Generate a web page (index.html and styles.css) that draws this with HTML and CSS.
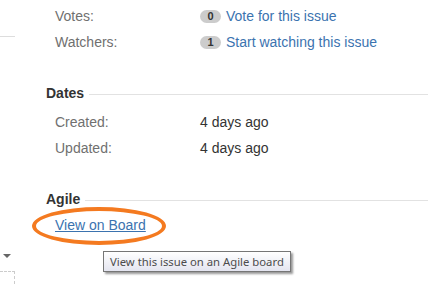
FILE: index.html
```html
<!DOCTYPE html>
<html lang="en">
<head>
    <meta charset="utf-8" />
    <link rel="stylesheet" href="styles.css">
</head>
<body>
    <div id="page">
        <div class="side">
            <div class="side-top"></div>
            <div class="side-arrow"></div>
            <div class="side-box"></div>
        </div>

        <div class="main">
            <ul class="props">
                <li>
                    <span class="label">Votes:</span>
                    <span class="value"><span class="badge">0</span><a href="#">Vote for this issue</a></span>
                </li>
                <li>
                    <span class="label">Watchers:</span>
                    <span class="value"><span class="badge">1</span><a href="#">Start watching this issue</a></span>
                </li>
            </ul>

            <h2 class="mod-head">Dates</h2>
            <ul class="props">
                <li>
                    <span class="label">Created:</span>
                    <span class="value">4 days ago</span>
                </li>
                <li>
                    <span class="label">Updated:</span>
                    <span class="value">4 days ago</span>
                </li>
            </ul>

            <h2 class="mod-head">Agile</h2>
            <div class="agile">
                <a class="board" href="#">View on Board</a>
                <span class="circle"></span>
                <span class="tip">View this issue on an Agile board</span>
            </div>
        </div>
    </div>
</body>
</html>
```

FILE: styles.css
```css
* {
    padding: 0;
    margin: 0;
}

li {
    list-style: none;
}

body {
    background: #fff;
    font-family: Arial, "Liberation Sans", sans-serif;
    font-size: 14px;
    color: #333;
    overflow: hidden;
}

#page {
    display: flex;
    gap: 31px;
    padding-top: 3px;
}

.side {
    width: 15px;
    flex: none;
}

.side-top {
    height: 33px;
    border-bottom: 1px solid #ddd;
}

.side-arrow {
    width: 0;
    height: 0;
    margin: 217px 0 0 3px;
    border-left: 4px solid transparent;
    border-right: 4px solid transparent;
    border-top: 4px solid #666;
}

.side-box {
    width: 14px;
    height: 12px;
    margin-top: 13px;
    border-top: 1px dashed #ccc;
    border-right: 1px dashed #ccc;
}

.main {
    width: 382px;
}

.props li {
    display: flex;
    align-items: center;
    height: 26px;
    padding-left: 9px;
}

.props .label {
    width: 145px;
    color: #707070;
}

.props .value {
    display: flex;
    align-items: center;
}

.badge {
    display: inline-block;
    width: 21px;
    height: 13px;
    line-height: 13px;
    border-radius: 7px;
    background: #ccc;
    color: #333;
    font-size: 11px;
    font-weight: bold;
    text-align: center;
    margin-right: 5px;
}

a {
    color: #3b73af;
    text-decoration: none;
}

.mod-head {
    display: flex;
    align-items: center;
    height: 20px;
    margin: 28px 0 6px;
    font-size: 14px;
    font-weight: bold;
    color: #333;
}

.mod-head::after {
    content: "";
    flex: 1;
    height: 1px;
    margin: 2px 0 0 5px;
    background: #e2e2e2;
}

.agile {
    position: relative;
    padding-left: 9px;
    line-height: 20px;
}

.board {
    text-decoration: underline;
}

.circle {
    position: absolute;
    left: -14px;
    top: -8px;
    width: 126px;
    height: 30px;
    border: 4px solid #f47a20;
    border-radius: 50%;
}

.tip {
    position: absolute;
    left: 57px;
    top: 36px;
    width: 180px;
    height: 19px;
    line-height: 19px;
    padding-left: 6px;
    border: 1px solid #767676;
    background: linear-gradient(#fff, #e4e5f0);
    box-shadow: 2px 2px 2px #999;
    font-family: "Noto Sans", "DejaVu Sans", sans-serif;
    font-size: 11.3px;
    color: #4c4c4c;
    white-space: nowrap;
}
```
